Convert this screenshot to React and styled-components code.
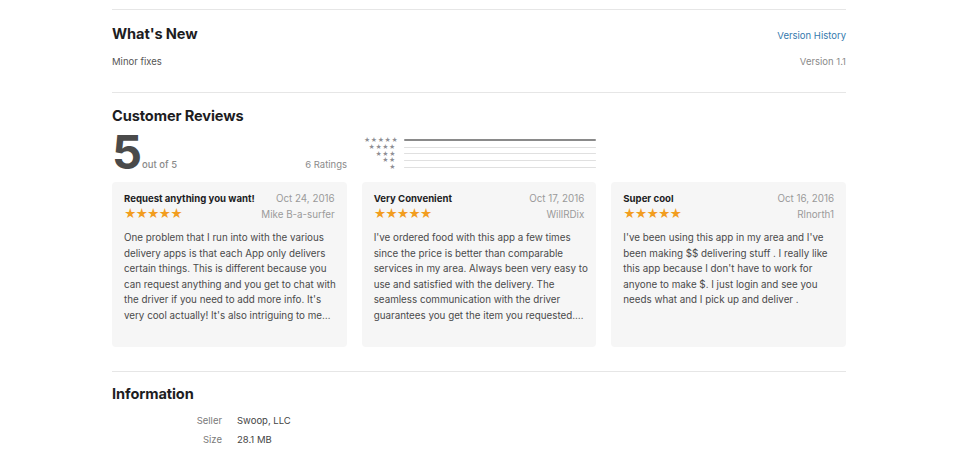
import React from "react";
import styled, { createGlobalStyle } from "styled-components";

const Global = createGlobalStyle`
  html, body { margin: 0; padding: 0; background: #fff; }
  body { font-family: Inter, "Liberation Sans", sans-serif; color: #333; -webkit-font-smoothing: antialiased; }
`;

const Page = styled.div`
  width: 734px;
  padding-top: 9px;
  margin-left: 112px;
`;

const Section = styled.section`
  border-top: 1px solid #e6e6e6;
  padding: ${p => p.$pad || "14px 0 0"};
`;

const HeadRow = styled.div`
  display: flex;
  justify-content: space-between;
  align-items: baseline;
`;

const H2 = styled.h2`
  margin: 0;
  font-size: 14.6px;
  font-weight: 700;
  color: #1d1d1f;
  letter-spacing: -0.1px;
  line-height: 20px;
`;

const Link = styled.a`
  font-size: 9.5px;
  color: #3479ad;
  text-decoration: none;
`;

const Small = styled.div`
  font-size: 9.5px;
  color: ${p => p.$c || "#555"};
`;

const NewRow = styled.div`
  display: flex;
  justify-content: space-between;
  margin-top: 12px;
  height: 36px;
`;

const Summary = styled.div`
  display: flex;
  align-items: flex-start;
  margin-top: 3px;
  height: 47px;
`;

const Score = styled.div`
  width: 235px;
  display: flex;
  align-items: flex-end;
  justify-content: space-between;
  height: 42px;
`;

const Big = styled.div`
  display: flex;
  align-items: flex-end;
  font-size: 47px;
  font-weight: 700;
  color: #4a4a4a;
  line-height: 38px;
  letter-spacing: -1px;
`;

const OutOf = styled.span`
  font-size: 9.5px;
  font-weight: 500;
  color: #8a8a8a;
  letter-spacing: 0;
  line-height: 12px;
  margin-left: 1px;
`;

const Ratings = styled.span`
  font-size: 9.5px;
  color: #8a8a8a;
  line-height: 12px;
`;

const Hist = styled.div`
  margin-left: 17px;
  margin-top: 8px;
  display: grid;
  grid-template-columns: 32px 192px;
  grid-auto-rows: 6.8px;
  column-gap: 8px;
`;

const StarCell = styled.div`
  font-size: 6px;
  line-height: 6.8px;
  color: #8e8e93;
  text-align: right;
  letter-spacing: 0.6px;
`;

const Bar = styled.div`
  display: flex;
  align-items: center;
  &::before {
    content: "";
    display: block;
    width: 100%;
    height: ${p => (p.$full ? "2px" : "1px")};
    background: ${p => (p.$full ? "#8a8a8a" : "#e0e0e0")};
    border-radius: 1px;
  }
`;

const Cards = styled.div`
  display: grid;
  grid-template-columns: repeat(3, minmax(0, 1fr));
  column-gap: 15px;
  margin-top: 6px;
  margin-bottom: 24px;
`;

const Card = styled.div`
  background: #f6f6f6;
  border-radius: 4px;
  height: 165px;
  padding: 10px 12px 0;
  box-sizing: border-box;
  min-width: 0;
`;

const CardTop = styled.div`
  display: flex;
  justify-content: space-between;
  align-items: baseline;
`;

const CardTitle = styled.div`
  font-size: 9.6px;
  font-weight: 700;
  color: #1d1d1f;
  line-height: 14px;
`;

const Meta = styled.div`
  font-size: 9.8px;
  color: #9a9a9a;
  line-height: 14px;
`;

const CardStars = styled.div`
  color: #f29d1f;
  font-size: 12px;
  letter-spacing: -1px;
  line-height: 16px;
`;

const Body = styled.p`
  margin: 8px 0 0;
  font-size: 9.8px;
  line-height: 15.6px;
  color: #4a4a4a;
`;

const Line = styled.span`
  display: block;
  white-space: nowrap;
`;

const InfoGrid = styled.dl`
  display: grid;
  grid-template-columns: 110px auto;
  column-gap: 15px;
  margin: 7px 0 0;
  font-size: 9.5px;
  line-height: 19px;
`;

const Dt = styled.dt`
  text-align: right;
  color: #7a7a7a;
`;

const Dd = styled.dd`
  margin: 0;
  color: #444;
`;

const reviews = [
  {
    title: "Request anything you want!",
    date: "Oct 24, 2016",
    author: "Mike B-a-surfer",
    body: [
      "One problem that I run into with the various",
      "delivery apps is that each App only delivers",
      "certain things. This is different because you",
      "can request anything and you get to chat with",
      "the driver if you need to add more info. It's",
      "very cool actually! It's also intriguing to me…",
    ],
  },
  {
    title: "Very Convenient",
    date: "Oct 17, 2016",
    author: "WillRDix",
    body: [
      "I've ordered food with this app a few times",
      "since the price is better than comparable",
      "services in my area. Always been very easy to",
      "use and satisfied with the delivery. The",
      "seamless communication with the driver",
      "guarantees you get the item you requested.…",
    ],
  },
  {
    title: "Super cool",
    date: "Oct 16, 2016",
    author: "Rlnorth1",
    body: [
      "I've been using this app in my area and I've",
      "been making $$ delivering stuff . I really like",
      "this app because I don't have to work for",
      "anyone to make $. I just login and see you",
      "needs what and I pick up and deliver .",
    ],
  },
];

export default function App() {
  return (
    <>
      <Global />
      <Page>
        <Section $pad="14px 0 0">
          <HeadRow>
            <H2>What's New</H2>
            <Link href="#">Version History</Link>
          </HeadRow>
          <NewRow>
            <Small>Minor fixes</Small>
            <Small $c="#8a8a8a">Version 1.1</Small>
          </NewRow>
        </Section>
        <Section $pad="13px 0 0">
          <H2>Customer Reviews</H2>
          <Summary>
            <Score>
              <Big>
                5<OutOf>out of 5</OutOf>
              </Big>
              <Ratings>6 Ratings</Ratings>
            </Score>
            <Hist>
              {[5, 4, 3, 2, 1].map(n => (
                <React.Fragment key={n}>
                  <StarCell>{"★".repeat(n)}</StarCell>
                  <Bar $full={n === 5} />
                </React.Fragment>
              ))}
            </Hist>
          </Summary>
          <Cards>
            {reviews.map(r => (
              <Card key={r.title}>
                <CardTop>
                  <CardTitle>{r.title}</CardTitle>
                  <Meta>{r.date}</Meta>
                </CardTop>
                <CardTop>
                  <CardStars>★★★★★</CardStars>
                  <Meta>{r.author}</Meta>
                </CardTop>
                <Body>
                  {r.body.map((l, i) => (
                    <Line key={i}>{l}</Line>
                  ))}
                </Body>
              </Card>
            ))}
          </Cards>
        </Section>
        <Section $pad="12px 0 0">
          <H2>Information</H2>
          <InfoGrid>
            <Dt>Seller</Dt>
            <Dd>Swoop, LLC</Dd>
            <Dt>Size</Dt>
            <Dd>28.1 MB</Dd>
          </InfoGrid>
        </Section>
      </Page>
    </>
  );
}
